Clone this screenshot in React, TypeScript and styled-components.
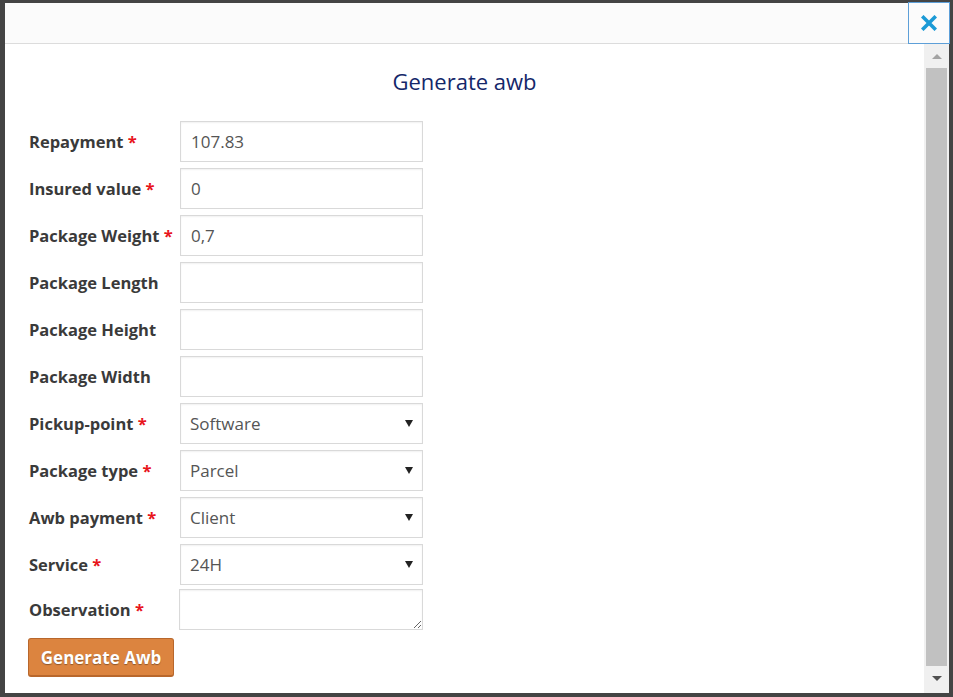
import styled, { createGlobalStyle } from 'styled-components';

const GlobalStyle = createGlobalStyle`
  html, body {
    margin: 0;
    padding: 0;
    background: #444444;
    font-family: "Open Sans", "Noto Sans", Arial, sans-serif;
  }
  * {
    box-sizing: border-box;
  }
`;

interface Field {
  label: string;
  required?: boolean;
  value?: string;
  kind: 'input' | 'select';
}

const fields: Field[] = [
  { label: 'Repayment', required: true, value: '107.83', kind: 'input' },
  { label: 'Insured value', required: true, value: '0', kind: 'input' },
  { label: 'Package Weight', required: true, value: '0,7', kind: 'input' },
  { label: 'Package Length', value: '', kind: 'input' },
  { label: 'Package Height', value: '', kind: 'input' },
  { label: 'Package Width', value: '', kind: 'input' },
  { label: 'Pickup-point', required: true, value: 'Software', kind: 'select' },
  { label: 'Package type', required: true, value: 'Parcel', kind: 'select' },
  { label: 'Awb payment', required: true, value: 'Client', kind: 'select' },
  { label: 'Service', required: true, value: '24H', kind: 'select' },
];

function App() {
  return (
    <>
      <GlobalStyle />
      <Backdrop>
        <Modal>
          <Header />
          <CloseButton aria-label="close">
            <svg width="16" height="16" viewBox="0 0 16 16">
              <path d="M2.5 2.5 L13.5 13.5 M13.5 2.5 L2.5 13.5" stroke="#1b9ad6" strokeWidth="3.6" strokeLinecap="square" />
            </svg>
          </CloseButton>
          <BodyArea>
            <Content>
              <Title>Generate awb</Title>
              <Form>
                {fields.map((f) => (
                  <Row key={f.label}>
                    <Label>
                      {f.label}
                      {f.required && <Star> *</Star>}
                    </Label>
                    {f.kind === 'input' ? (
                      <TextInput defaultValue={f.value} />
                    ) : (
                      <SelectWrap>
                        <Select defaultValue={f.value}>
                          <option>{f.value}</option>
                        </Select>
                      </SelectWrap>
                    )}
                  </Row>
                ))}
                <Row $tight>
                  <Label>
                    Observation<Star> *</Star>
                  </Label>
                  <TextArea />
                </Row>
                <SubmitButton>Generate Awb</SubmitButton>
              </Form>
            </Content>
            <Scrollbar>
              <ScrollArrow $up />
              <Thumb />
              <ScrollArrow />
            </Scrollbar>
          </BodyArea>
        </Modal>
      </Backdrop>
    </>
  );
}

const Backdrop = styled.div`
  width: 953px;
  height: 697px;
  padding: 3px 4px 4px 5px;
`;

const Modal = styled.div`
  position: relative;
  width: 944px;
  height: 690px;
  background: #ffffff;
  display: flex;
  flex-direction: column;
`;

const Header = styled.div`
  height: 41px;
  background: #fbfbfb;
  border-bottom: 1px solid #dcdcdc;
  flex-shrink: 0;
`;

const CloseButton = styled.button`
  position: absolute;
  top: -1px;
  right: -1px;
  width: 42px;
  height: 42px;
  padding: 0;
  background: #fbfbfb;
  border: 1px solid #5d9fd8;
  display: flex;
  align-items: center;
  justify-content: center;
  cursor: pointer;
`;

const BodyArea = styled.div`
  flex: 1;
  display: flex;
  min-height: 0;
`;

const Content = styled.div`
  flex: 1;
  padding: 24px 24px 0 24px;
`;

const Title = styled.h2`
  margin: 0 0 27px 0;
  font-size: 22px;
  line-height: 26px;
  font-weight: 500;
  color: #14276a;
  text-align: center;
`;

const Form = styled.div`
  display: flex;
  flex-direction: column;
  gap: 6px;
`;

const Row = styled.div<{ $tight?: boolean }>`
  display: grid;
  grid-template-columns: ${(p) => (p.$tight ? '150px 244px' : '151px 243px')};
  align-items: center;
  margin-top: ${(p) => (p.$tight ? '-2px' : '0')};
`;

const Label = styled.label`
  font-size: 16.5px;
  font-weight: 700;
  color: #3a3a3a;
  white-space: nowrap;
`;

const Star = styled.span`
  color: #e8141b;
`;

const fieldBase = `
  width: 100%;
  height: 41px;
  border: 1px solid #d9d9d9;
  box-shadow: inset 0 1px 2px rgba(0, 0, 0, 0.06);
  background: #ffffff;
  font-family: "Open Sans", "Noto Sans", Arial, sans-serif;
  font-size: 17px;
  color: #555555;
  padding: 0 10px;
  outline: none;
  border-radius: 0;
`;

const TextInput = styled.input`
  ${fieldBase}
`;

const SelectWrap = styled.div`
  position: relative;

  &::after {
    content: '';
    position: absolute;
    right: 10px;
    top: 17px;
    border-left: 4px solid transparent;
    border-right: 4px solid transparent;
    border-top: 7px solid #222222;
    pointer-events: none;
  }
`;

const Select = styled.select`
  ${fieldBase}
  appearance: none;
  -webkit-appearance: none;
  padding-left: 9px;
`;

const TextArea = styled.textarea`
  ${fieldBase}
  display: block;
  resize: both;
`;

const SubmitButton = styled.button`
  margin-top: 2px;
  margin-left: -1px;
  align-self: flex-start;
  width: 146px;
  height: 39px;
  background: #dc843f;
  border: 1px solid #b8672c;
  border-bottom-width: 2px;
  border-radius: 3px;
  color: #ffffff;
  font-family: "Open Sans", "Noto Sans", Arial, sans-serif;
  font-size: 17px;
  font-weight: 700;
  text-shadow: 0 1px 1px rgba(0, 0, 0, 0.35);
  cursor: pointer;
`;

const Scrollbar = styled.div`
  width: 25px;
  background: #f0f0f0;
  display: flex;
  flex-direction: column;
  align-items: center;
  padding-bottom: 3px;
`;

const ScrollArrow = styled.div<{ $up?: boolean }>`
  height: 24px;
  width: 100%;
  flex-shrink: 0;
  display: flex;
  align-items: center;
  justify-content: center;

  &::before {
    content: '';
    border-left: 5px solid transparent;
    border-right: 5px solid transparent;
    ${(p) => (p.$up ? 'border-bottom: 5px solid #a3a3a3;' : 'border-top: 5px solid #505050;')}
  }
`;

const Thumb = styled.div`
  flex: 1;
  width: 21px;
  background: #c1c1c1;
`;

export default App;
